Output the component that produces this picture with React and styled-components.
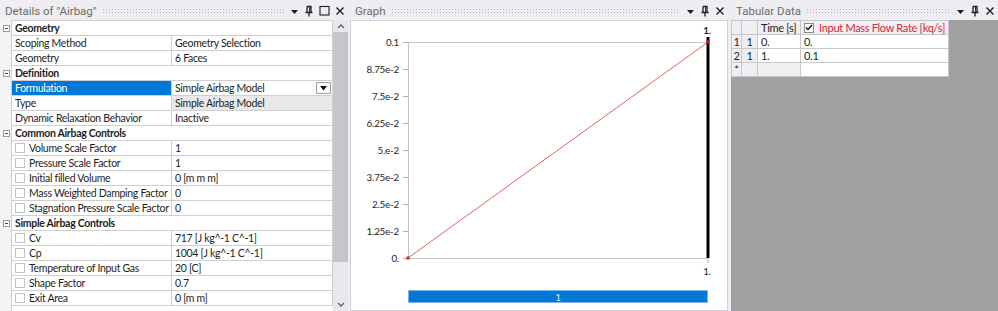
import React from 'react';
import styled, { createGlobalStyle } from 'styled-components';

const GlobalStyle = createGlobalStyle`
  html, body { margin: 0; padding: 0; }
  body {
    background: #eeeef2;
    font-family: Lato, "Noto Sans", sans-serif;
    font-size: 10.5px;
    letter-spacing: -0.3px;
    color: #1e1e1e;
  }
`;

const Frame = styled.div`
  display: flex;
  height: 311px;
  overflow: hidden;
`;

const Panel = styled.section`
  display: flex;
  flex-direction: column;
  width: ${p => p.$width}px;
  margin-left: ${p => p.$ml || 0}px;
  flex-shrink: 0;
`;

const PanelHeader = styled.div`
  height: 20px;
  display: flex;
  align-items: center;
  padding: 1px 3px 0 5px;
  box-sizing: border-box;
  color: #6b6b6b;
  font-family: Roboto, sans-serif;
  font-size: 11.5px;
  letter-spacing: 0;
`;

const Grip = styled.div`
  flex: 1;
  height: 5px;
  margin: 0 6px 0 5px;
  background-image: radial-gradient(circle, #b4b4b8 0.7px, transparent 0.9px);
  background-size: 3px 3px;
`;

const HeaderIcons = styled.div`
  display: flex;
  align-items: center;
  gap: ${p => p.$gap || 5}px;
`;

const PanelBody = styled.div`
  flex: 1;
  display: flex;
  flex-direction: ${p => (p.$column ? 'column' : 'row')};
  background: ${p => p.$bg || '#ffffff'};
  border: ${p => (p.$border ? '1px solid #d2d3d8' : 'none')};
  min-height: 0;
  overflow: hidden;
`;

/* header icons */
const Drop = () => (
  <svg width="9" height="10" viewBox="0 0 9 10">
    <path d="M1 4 L8 4 L4.5 8 Z" fill="#1e1e1e" />
  </svg>
);
const Pin = () => (
  <svg width="10" height="12" viewBox="0 0 10 12">
    <path d="M3 1.5 H7 V7.5 M3 1.5 V7.5 M1.5 7.5 H8.5 M5 7.5 V11.5" stroke="#1e1e1e" strokeWidth="1.3" fill="none" />
    <path d="M5.6 2 V7" stroke="#1e1e1e" strokeWidth="1" />
  </svg>
);
const Maximize = () => (
  <svg width="11" height="11" viewBox="0 0 11 11">
    <rect x="1" y="1.5" width="9" height="8.5" stroke="#1e1e1e" strokeWidth="1.1" fill="none" />
  </svg>
);
const Close = () => (
  <svg width="10" height="10" viewBox="0 0 10 10">
    <path d="M1.5 1.5 L8.5 8.5 M8.5 1.5 L1.5 8.5" stroke="#1e1e1e" strokeWidth="1.4" />
  </svg>
);

/* details grid */
const DetailsTable = styled.div`
  display: flex;
  width: 333px;
`;

const Gutter = styled.div`
  width: 11px;
  padding-top: 1px;
  background: #f4f4f6;
`;

const GutterCell = styled.div`
  height: 15px;
  display: flex;
  align-items: center;
  padding-left: 3px;
`;

const CollapseBox = styled.div`
  width: 7px;
  height: 7px;
  border: 1px solid #9a9a9a;
  box-sizing: border-box;
  background: #fff;
  position: relative;
  &::after {
    content: '';
    position: absolute;
    left: 1px;
    right: 1px;
    top: 2px;
    height: 1px;
    background: #444;
  }
`;

const Cells = styled.div`
  flex: 1;
  border-top: 1px solid #cfcfd2;
  border-left: 1px solid #cfcfd2;
`;

const Row = styled.div`
  display: grid;
  grid-template-columns: ${p => (p.$category ? '1fr' : '160px 1fr')};
  height: 15px;
`;

const Cell = styled.div`
  display: flex;
  align-items: center;
  padding-left: 3px;
  border-right: 1px solid #cfcfd2;
  border-bottom: 1px solid #cfcfd2;
  background: ${p => (p.$selected ? '#0078d7' : p.$readonly ? '#e9e9eb' : '#ffffff')};
  color: ${p => (p.$selected ? '#ffffff' : '#1e1e1e')};
  font-weight: ${p => (p.$bold ? 700 : 400)};
  white-space: nowrap;
  overflow: hidden;
`;

const CheckBox = styled.span`
  width: 10px;
  height: 10px;
  border: 1px solid #c3c3c3;
  box-sizing: border-box;
  background: #fff;
  margin-right: 4px;
  flex-shrink: 0;
`;

const DropButton = styled.span`
  margin-left: auto;
  margin-right: 1px;
  width: 15px;
  height: 12px;
  border: 1px solid #a0a0a0;
  box-sizing: border-box;
  display: flex;
  align-items: center;
  justify-content: center;
  background: #fff;
`;

const Scrollbar = styled.div`
  width: 15px;
  background: #e8e8ea;
  display: flex;
  flex-direction: column;
  align-items: center;
`;

const ScrollArrow = styled.div`
  height: ${p => p.$h}px;
  display: flex;
  align-items: center;
  justify-content: center;
  margin-top: ${p => (p.$bottom ? 'auto' : '0')};
`;

const Thumb = styled.div`
  width: 15px;
  height: 230px;
  background: #c6c6c8;
`;

/* graph */
const ChartSvg = styled.svg`
  display: block;
  flex-shrink: 0;
`;

const RangeBar = styled.div`
  width: 300px;
  height: 13px;
  margin: 4px 0 0 57px;
  background: #0078d7;
  border: 1px solid #7fb4e6;
  box-sizing: border-box;
  color: #dbe9f8;
  font-size: 10px;
  display: flex;
  align-items: center;
  justify-content: center;
`;

/* tabular */
const Tab = styled.div`
  display: grid;
  grid-template-columns: 10px 16px 43px 148px;
  grid-auto-rows: 14px;
  border-top: 1px solid #c8c8cc;
  border-left: 1px solid #c8c8cc;
  width: max-content;
  align-self: flex-start;
  font-size: 11px;
`;

const TabCell = styled.div`
  display: flex;
  align-items: center;
  justify-content: ${p => (p.$center ? 'center' : 'flex-start')};
  padding-left: ${p => (p.$center ? 0 : 3)}px;
  border-right: 1px solid #c8c8cc;
  border-bottom: 1px solid #c8c8cc;
  background: ${p => (p.$gray ? '#efeff1' : '#ffffff')};
  color: ${p => (p.$red ? '#d9263a' : '#1e1e1e')};
  white-space: nowrap;
  overflow: hidden;
`;

const TabCheck = styled.span`
  width: 10px;
  height: 10px;
  border: 1px solid #8c8c8c;
  box-sizing: border-box;
  background: #fff;
  margin-right: 5px;
  display: flex;
  align-items: center;
  justify-content: center;
`;

const detailRows = [
  { cat: 'Geometry' },
  { name: 'Scoping Method', value: 'Geometry Selection' },
  { name: 'Geometry', value: '6 Faces' },
  { cat: 'Definition' },
  { name: 'Formulation', value: 'Simple Airbag Model', selected: true },
  { name: 'Type', value: 'Simple Airbag Model', readonly: true },
  { name: 'Dynamic Relaxation Behavior', value: 'Inactive' },
  { cat: 'Common Airbag Controls' },
  { name: 'Volume Scale Factor', value: '1', check: true },
  { name: 'Pressure Scale Factor', value: '1', check: true },
  { name: 'Initial filled Volume', value: '0 [m m m]', check: true },
  { name: 'Mass Weighted Damping Factor', value: '0', check: true },
  { name: 'Stagnation Pressure Scale Factor', value: '0', check: true },
  { cat: 'Simple Airbag Controls' },
  { name: 'Cv', value: '717 [J kg^-1 C^-1]', check: true },
  { name: 'Cp', value: '1004 [J kg^-1 C^-1]', check: true },
  { name: 'Temperature of Input Gas', value: '20 [C]', check: true },
  { name: 'Shape Factor', value: '0.7', check: true },
  { name: 'Exit Area', value: '0 [m m]', check: true },
];

const yLabels = ['0.1', '8.75e-2', '7.5e-2', '6.25e-2', '5.e-2', '3.75e-2', '2.5e-2', '1.25e-2', '0.'];

function Details() {
  return (
    <Panel $width={348}>
      <PanelHeader>
        <span>Details of "Airbag"</span>
        <Grip />
        <HeaderIcons $gap={5}>
          <Drop />
          <Pin />
          <Maximize />
          <Close />
        </HeaderIcons>
      </PanelHeader>
      <PanelBody>
        <DetailsTable>
          <Gutter>
            {detailRows.map((r, i) => (
              <GutterCell key={i}>{r.cat && <CollapseBox />}</GutterCell>
            ))}
          </Gutter>
          <Cells>
            {detailRows.map((r, i) =>
              r.cat ? (
                <Row key={i} $category>
                  <Cell $bold>{r.cat}</Cell>
                </Row>
              ) : (
                <Row key={i}>
                  <Cell $selected={r.selected}>
                    {r.check && <CheckBox />}
                    {r.name}
                  </Cell>
                  <Cell $readonly={r.readonly}>
                    {r.value}
                    {r.selected && (
                      <DropButton>
                        <svg width="7" height="5" viewBox="0 0 7 5">
                          <path d="M0 0 H7 L3.5 4.5 Z" fill="#111" />
                        </svg>
                      </DropButton>
                    )}
                  </Cell>
                </Row>
              )
            )}
          </Cells>
        </DetailsTable>
        <Scrollbar>
          <ScrollArrow $h={12}>
            <svg width="8" height="5" viewBox="0 0 8 5">
              <path d="M1 4 L4 1 L7 4" stroke="#606060" strokeWidth="1.4" fill="none" />
            </svg>
          </ScrollArrow>
          <Thumb />
          <ScrollArrow $h={14} $bottom>
            <svg width="8" height="5" viewBox="0 0 8 5">
              <path d="M1 1 L4 4 L7 1" stroke="#606060" strokeWidth="1.4" fill="none" />
            </svg>
          </ScrollArrow>
        </Scrollbar>
      </PanelBody>
    </Panel>
  );
}

function Graph() {
  const x0 = 57;
  const x1 = 357;
  const yTop = 21;
  const yBot = 237;
  return (
    <Panel $width={378} $ml={2}>
      <PanelHeader>
        <span>Graph</span>
        <Grip />
        <HeaderIcons $gap={5}>
          <Drop />
          <Pin />
          <Close />
        </HeaderIcons>
      </PanelHeader>
      <PanelBody $border $column>
        <ChartSvg width="376" height="265" viewBox="0 0 376 265" fontFamily="Lato, 'Noto Sans', sans-serif" fontSize="9.8" letterSpacing="-0.2">
          <line x1={x0} y1={yTop + 0.5} x2={x1} y2={yTop + 0.5} stroke="#c4c4c4" />
          <line x1={x0} y1={yBot + 0.5} x2={x1} y2={yBot + 0.5} stroke="#c4c4c4" />
          <line x1={x0 + 0.5} y1={yTop} x2={x0 + 0.5} y2={yBot} stroke="#c4c4c4" />
          {yLabels.map((l, i) => {
            const y = yTop + i * 27;
            return (
              <g key={l}>
                <line x1={x0 - 5} y1={y + 0.5} x2={x0} y2={y + 0.5} stroke="#b0b0b0" />
                <text x={x0 - 9} y={y + 4} textAnchor="end" fill="#1e1e1e">{l}</text>
              </g>
            );
          })}
          <line x1={x1} y1={yBot} x2={x1} y2={yBot + 5} stroke="#b0b0b0" />
          <line x1={x0} y1={yBot} x2={x1} y2={yTop} stroke="#e06262" strokeWidth="1" />
          <line x1={x1} y1={yTop - 5} x2={x1} y2={yBot} stroke="#000" strokeWidth="3" />
          <rect x={x0 - 1.5} y={yBot - 1.5} width="3" height="3" fill="#cc1f1f" />
          <rect x={x1 - 1.5} y={yTop - 1.5} width="3" height="3" fill="#cc1f1f" />
          <text x={x1 - 1} y={yTop - 8} textAnchor="middle" fontWeight="700" fill="#1e1e1e">1.</text>
          <text x={x1 - 1} y={yBot + 17} textAnchor="middle" fill="#1e1e1e">1.</text>
        </ChartSvg>
        <RangeBar>1</RangeBar>
      </PanelBody>
    </Panel>
  );
}

function Tabular() {
  return (
    <Panel $width={267} $ml={3}>
      <PanelHeader>
        <span>Tabular Data</span>
        <Grip />
        <HeaderIcons $gap={5}>
          <Drop />
          <Pin />
          <Close />
        </HeaderIcons>
      </PanelHeader>
      <PanelBody $bg="#a0a0a2">
        <Tab>
          <TabCell $gray />
          <TabCell $gray />
          <TabCell $gray>Time [s]</TabCell>
          <TabCell $gray $red>
            <TabCheck>
              <svg width="8" height="7" viewBox="0 0 8 7">
                <path d="M1 3.5 L3 5.5 L7 1" stroke="#111" strokeWidth="1.5" fill="none" />
              </svg>
            </TabCheck>
            Input Mass Flow Rate [kq/s]
          </TabCell>

          <TabCell $gray $center>1</TabCell>
          <TabCell $gray $center>1</TabCell>
          <TabCell>0.</TabCell>
          <TabCell>0.</TabCell>

          <TabCell $gray $center>2</TabCell>
          <TabCell $gray $center>1</TabCell>
          <TabCell>1.</TabCell>
          <TabCell>0.1</TabCell>

          <TabCell $gray $center>*</TabCell>
          <TabCell $gray />
          <TabCell $gray />
          <TabCell />
        </Tab>
      </PanelBody>
    </Panel>
  );
}

export default function App() {
  return (
    <>
      <GlobalStyle />
      <Frame>
        <Details />
        <Graph />
        <Tabular />
      </Frame>
    </>
  );
}
